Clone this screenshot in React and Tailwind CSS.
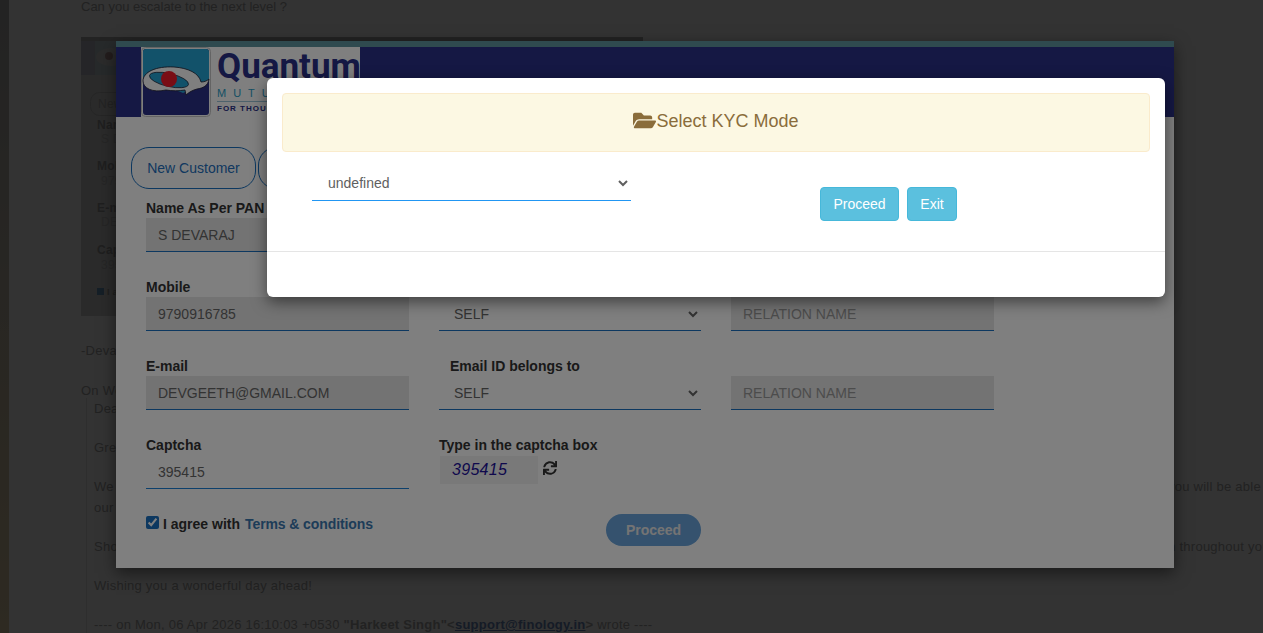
import { FaFolderOpen, FaSync } from 'react-icons/fa';

const ARIAL = { fontFamily: '"Liberation Sans", Arial, sans-serif' };

function QuantumLogo() {
  return (
    <svg width="70" height="70" viewBox="0 0 70 70" className="shrink-0">
      <rect x="0.5" y="0.5" width="69" height="69" rx="4" fill="#ffffff" stroke="#c8c8c8" />
      <rect x="2" y="2" width="66" height="66" rx="3" fill="#2a3088" />
      <path d="M2 5a3 3 0 0 1 3-3h60a3 3 0 0 1 3 3v29l-26 12L2 30z" fill="#24a4d4" />
      <path d="M2 34C2 25 15 19 33 20c14 1 25 6 27 15 3 0 6-1 8-3-1 7-6 9-12 10-4 1-8 3-11 6l-1-5c-6 1-13 1-19 0C11 46 2 41 2 34z" fill="#ffffff" stroke="#1c1c30" strokeWidth="0.8" />
      <ellipse cx="28" cy="33" rx="20" ry="6.5" transform="rotate(13 28 33)" fill="#24a4d4" stroke="#1c1c30" strokeWidth="0.7" />
      <circle cx="28" cy="32" r="8" fill="#f21a2a" />
    </svg>
  );
}

// the screenshot pasted in the email, mostly hidden behind the form
function EmbeddedShot() {
  return (
    <svg width="562" height="279" viewBox="0 0 562 279" className="block" fontFamily="Liberation Sans, Arial, sans-serif" fontSize="14">
      <rect width="562" height="279" fill="#d4d4d4" />
      <rect width="562" height="38" fill="#bcbcc8" />
      <rect x="14" y="2" width="190" height="36" fill="#c0d0d4" />
      <ellipse cx="30" cy="20" rx="15" ry="9" fill="#d8d8d8" />
      <circle cx="28" cy="19" r="4" fill="#b09090" />
      <rect width="562" height="4" fill="#b0b0b0" />
      <rect x="9.5" y="55.5" width="120" height="23" rx="9" fill="none" stroke="#bcbcbc" />
      <text x="17" y="71" fill="#b0b0b0" fontSize="12">New Customer</text>
      <g fontWeight="bold" fontSize="12" fill="#9a9a9a">
        <text x="16" y="92">Name</text>
        <text x="16" y="133">Mobile</text>
        <text x="16" y="175">E-mail</text>
        <text x="16" y="217">Captcha</text>
      </g>
      <g fontSize="12" fill="#bcbcbc">
        <text x="20" y="106">S DEVARAJ</text>
        <text x="20" y="148">9790916785</text>
        <text x="20" y="189">DEVGEETH</text>
        <text x="20" y="232">395415</text>
      </g>
      <rect x="16" y="251" width="7" height="7" fill="#6a98c0" />
      <text x="26" y="258" fontSize="9" fontWeight="bold" fill="#9a9a9a">I agree</text>
    </svg>
  );
}

function Field({ label, value, placeholder, tinted, focused }) {
  return (
    <div className="flex flex-col">
      <div className="h-5 text-sm font-bold leading-5 text-[#333]">{label}</div>
      <input
        readOnly
        value={value || ''}
        placeholder={placeholder}
        className={`h-[34px] w-full border-b px-3 text-sm text-[#666] outline-none placeholder:text-[#999] ${tinted ? 'bg-[#e6e6e6]' : 'bg-white'} ${focused ? 'border-[#1a80d8]' : 'border-[#1a70c0]'}`}
      />
    </div>
  );
}

function SelectField({ label }) {
  return (
    <div className="flex flex-col">
      <div className="h-5 pl-[11px] text-sm font-bold leading-5 text-[#333]">{label}</div>
      <select className="h-[34px] w-full border-0 border-b border-[#1a70c0] bg-white px-[11px] text-sm text-[#666] outline-none">
        <option>SELF</option>
      </select>
    </div>
  );
}

function FormModal() {
  return (
    <div className="absolute left-[116px] top-[41px] h-[527px] w-[1058px] overflow-hidden bg-white shadow-[0_5px_15px_rgba(0,0,0,0.5)]" style={ARIAL}>
      <div className="h-[6px] bg-[#5e949e]" />
      <div className="h-[70px] bg-[#2a3088] pl-[25px]">
        <div className="flex h-full w-[219px] gap-[6px] bg-white">
          <QuantumLogo />
          <div className="flex flex-col">
            <div className="mt-[1px] h-[38px] text-[35px] font-bold leading-[38px] text-[#2a3088]" style={{ fontFamily: 'Roboto, sans-serif' }}>Quantum</div>
            <div className="mt-[1px] text-[11px] leading-[13px] tracking-[7px] text-[#2ba0c8]">MUTUAL</div>
            <div className="mt-[1px] w-[130px] border-t border-[#9cc4d8] pt-[2px] text-[8px] font-bold leading-[10px] tracking-[1px] whitespace-nowrap text-[#2a3088]">FOR THOUGHTFUL INVESTORS</div>
          </div>
        </div>
      </div>

      <div className="flex gap-[2px] pl-[15px] pt-[30px]">
        <button className="h-[42px] w-[125px] rounded-[18px] border border-[#1a70c0] text-sm text-[#2470c0]">New Customer</button>
        <button className="h-[42px] w-[150px] rounded-[18px] border border-[#1a70c0] text-sm text-[#2470c0]">Existing Customer</button>
      </div>

      <div className="mt-[9px] grid w-[848px] grid-cols-[263px_262px_263px] gap-x-[30px] gap-y-[25px] pl-[30px]">
        <Field label="Name As Per PAN" value="S DEVARAJ" tinted />
        <div />
        <div />

        <Field label="Mobile" value="9790916785" tinted />
        <SelectField label="Mobile No. belongs to" />
        <Field label={'\u00a0'} placeholder="RELATION NAME" tinted />

        <Field label="E-mail" value="DEVGEETH@GMAIL.COM" tinted />
        <SelectField label="Email ID belongs to" />
        <Field label={'\u00a0'} placeholder="RELATION NAME" tinted />

        <Field label="Captcha" value="395415" focused />
        <div className="flex flex-col">
          <div className="h-5 text-sm font-bold leading-5 text-[#333]">Type in the captcha box</div>
          <div className="flex items-start">
            <div className="ml-px mt-px h-7 w-[98px] bg-[#f2f2f2] pl-3 text-base italic leading-7 tracking-[0.3px] text-[#20109a]">395415</div>
            <FaSync className="ml-[5px] mt-[6px] text-[14px] text-[#333]" />
          </div>
        </div>
        <div />

        <label className="flex h-8 items-start text-sm font-bold text-[#333]">
          <input type="checkbox" readOnly checked className="mt-[2px] size-[13px] accent-[#1a70c0]" />
          <span className="ml-1 leading-5">I agree with</span>
          <span className="ml-[5px] leading-5 tracking-[-0.1px] text-[#3a78b0]">Terms &amp; conditions</span>
        </label>
        <div className="flex justify-end">
          <button className="h-8 w-[95px] rounded-2xl bg-[#6aa5dc] text-sm font-bold text-[#e8e8e8]">Proceed</button>
        </div>
        <div />
      </div>
    </div>
  );
}

function KycModal() {
  return (
    <div className="absolute left-[267px] top-[78px] h-[219px] w-[898px] rounded-md bg-white shadow-[0_5px_15px_rgba(0,0,0,0.5)]" style={ARIAL}>
      <div className="p-[15px] pb-0">
        <div className="flex h-[59px] items-center justify-center rounded border border-[#faebcc] bg-[#fcf8e3] pb-1 text-lg text-[#8a6d3b]">
          <FaFolderOpen className="text-[23px]" />
          <span>Select KYC Mode</span>
        </div>
      </div>
      <div className="flex h-[100px] items-start border-b border-[#e5e5e5]">
        <select className="ml-[45px] mt-[14px] h-[35px] w-[319px] border-0 border-b border-[#2196f3] bg-white px-3 text-sm text-[#5f5f5f] outline-none">
          <option>undefined</option>
        </select>
        <div className="ml-[189px] mt-[35px] flex gap-2">
          <button className="h-[34px] w-[79px] rounded border border-[#46b8da] bg-[#5bc0de] text-sm text-white">Proceed</button>
          <button className="h-[34px] w-[50px] rounded border border-[#46b8da] bg-[#5bc0de] text-sm text-white">Exit</button>
        </div>
      </div>
    </div>
  );
}

export default function App() {
  return (
    <div className="relative h-[633px] w-[1263px] overflow-hidden bg-white">
      <div className="flex h-full">
        <div className="h-full w-[9px] shrink-0 bg-linear-to-b from-[#b0b0b0] to-[#e6d2aa]" />
        <div className="min-w-0 flex-1 pl-[72px] text-[13px] leading-[21px] tracking-[0.25px] text-[#aaa]" style={ARIAL}>
          <div className="-mt-[4px] h-[41px] tracking-normal">Can you escalate to the next level ?</div>
          <EmbeddedShot />
          <div className="mt-[24px] h-[40px]">-Devaraj</div>
          <div className="h-[18px]">On Wed, 08 Apr 2026 wrote:</div>
          <div className="ml-[5px] border-l border-[#e8e8e8] pl-[7px]">
            <div className="h-[39px]">Dear Devaraj,</div>
            <div className="h-[39px]">Greetings from Finology,</div>
            <p className="h-[21px] whitespace-nowrap"><span className="inline-block w-[1074px]">We</span>you will be able</p>
            <div className="h-[39px]">our team</div>
            <p className="h-[39px] whitespace-nowrap"><span className="inline-block w-[1071px]">Should</span>in throughout your</p>
            <div className="h-[39px]">Wishing you a wonderful day ahead!</div>
            <div className="whitespace-nowrap">
              ---- on Mon, 06 Apr 2026 16:10:03 +0530 <b>"Harkeet Singh"&lt;<u className="text-[#6a8ac0]">support@finology.in</u>&gt;</b> wrote ----
            </div>
          </div>
        </div>
      </div>

      <div className="absolute inset-0 bg-black/60" />
      <FormModal />
      <div className="absolute inset-0 bg-black/50" />
      <KycModal />
    </div>
  );
}
